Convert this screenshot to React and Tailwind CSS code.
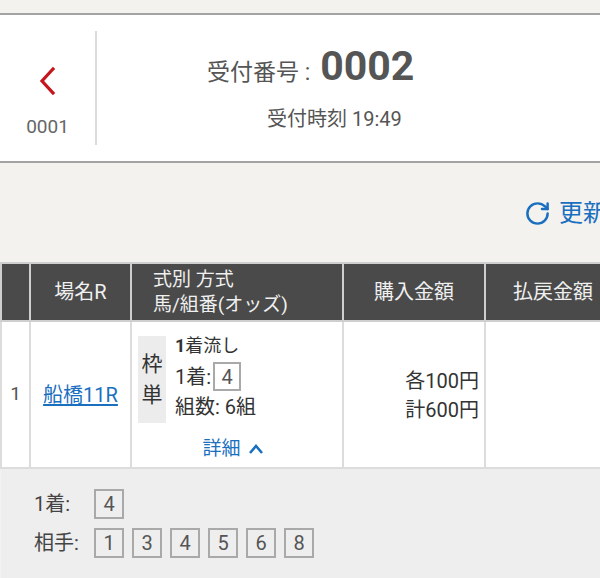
import React from 'react';
import { RotateCw } from 'lucide-react';

const font = { fontFamily: 'Roboto, "Noto Sans CJK JP", sans-serif' };

const NumBox = ({ n }) => (
  <span className="inline-flex items-center justify-center w-[30px] h-[30px] border-2 border-[#a9a9a9] text-[20px] text-[#555] leading-none">
    {n}
  </span>
);

const App = () => {
  const partners = [1, 3, 4, 5, 6, 8];

  return (
    <div className="w-[600px] h-[578px] overflow-hidden bg-[#f3f2ef] text-[#333]" style={font}>
      <div className="h-[13px]" />

      {/* receipt header */}
      <div className="bg-white border-y-2 border-[#a3a3a3] h-[150px] flex items-center">
        <div className="w-[97px] h-[114px] border-r-2 border-[#dcdcdc] flex flex-col items-center">
          <svg width="20" height="30" viewBox="0 0 20 30" className="mt-[35px]">
            <path d="M15 3 L4 15 L15 27" fill="none" stroke="#c4161c" strokeWidth="3.2" strokeLinecap="square" />
          </svg>
          <span className="mt-[21px] text-[19px] text-[#666] leading-none">0001</span>
        </div>
        <div className="flex-1 flex flex-col">
          <div className="ml-[110px] flex items-baseline text-[#555] mt-[4px]">
            <span className="text-[23px]">受付番号 :</span>
            <span className="ml-[10px] text-[41px] font-bold leading-none">0002</span>
          </div>
          <div className="ml-[170px] mt-[14px] text-[20px] text-[#555]">受付時刻 19:49</div>
        </div>
      </div>

      {/* refresh */}
      <div className="h-[99px] flex items-center pl-[524px] pt-[1px] text-[#1a6fbf]">
        <RotateCw size={27} strokeWidth={2.2} className="shrink-0" />
        <span className="ml-[8px] text-[24px] whitespace-nowrap">更新</span>
      </div>

      {/* table */}
      <table className="border-collapse table-fixed w-[640px] text-[20px]">
        <colgroup>
          <col className="w-[29px]" />
          <col className="w-[101px]" />
          <col className="w-[212px]" />
          <col className="w-[142px]" />
          <col className="w-[156px]" />
        </colgroup>
        <thead>
          <tr className="bg-[#4a4a4a] text-[#f0f0f0] h-[58px] font-normal">
            <th className="border-2 border-[#cfcfcf] font-normal"></th>
            <th className="border-2 border-[#cfcfcf] font-normal text-[20px]">場名R</th>
            <th className="border-2 border-[#cfcfcf] font-normal text-left pl-[21px] text-[19px] leading-[25px]">
              式別 方式
              <br />
              馬/組番(オッズ)
            </th>
            <th className="border-2 border-[#cfcfcf] font-normal text-[20px]">購入金額</th>
            <th className="border-2 border-[#cfcfcf] font-normal text-left pl-[27px] text-[20px]">払戻金額</th>
          </tr>
        </thead>
        <tbody>
          <tr className="bg-white h-[147px]">
            <td className="border-2 border-[#dcdcdc] text-center text-[#555] text-[19px]">1</td>
            <td className="border-2 border-[#dcdcdc] text-center">
              <a className="text-[#1a6fbf] underline underline-offset-2">船橋11R</a>
            </td>
            <td className="border-2 border-[#dcdcdc] align-top">
              <div className="flex pt-[14px] pl-[6px]">
                <div className="w-[28px] h-[87px] bg-[#ececec] flex flex-col items-center justify-center text-[21px] leading-[31px]">
                  <span>枠</span>
                  <span>単</span>
                </div>
                <div className="ml-[9px] flex flex-col text-[20px]">
                  <span className="leading-[24px] -mt-[2px] text-[18px]">
                    <span className="font-bold">1</span>着流し
                  </span>
                  <span className="flex items-center mt-[4px] leading-[28px]">
                    1着:
                    <span className="ml-[2px] inline-flex items-center justify-center w-[28px] h-[29px] border-2 border-[#a9a9a9] text-[#555]">4</span>
                  </span>
                  <span className="mt-[2px] leading-[28px]">組数: 6組</span>
                </div>
              </div>
              <div className="flex items-center justify-center mt-[12px] pr-[8px] text-[#1a6fbf] text-[19px]">
                詳細
                <svg width="16" height="12" viewBox="0 0 16 12" className="ml-[7px]">
                  <path d="M2 10 L8 3 L14 10" fill="none" stroke="#1a6fbf" strokeWidth="2.6" />
                </svg>
              </div>
            </td>
            <td className="border-2 border-[#dcdcdc] text-right pr-[5px] leading-[29px] pt-[2px]">
              各100円
              <br />
              計600円
            </td>
            <td className="border-2 border-[#dcdcdc]"></td>
          </tr>
          <tr className="bg-[#eeeeee]">
            <td colSpan={5} className="border-t-2 border-[#dcdcdc] h-[112px] align-top">
              <div className="pl-[33px] pt-[20px] flex flex-col gap-[9px] text-[20px] text-[#444]">
                <div className="flex items-center">
                  <span className="w-[60px]">1着:</span>
                  <NumBox n={4} />
                </div>
                <div className="flex items-center">
                  <span className="w-[60px]">相手:</span>
                  <div className="flex gap-[8px]">
                    {partners.map((p) => (
                      <NumBox key={p} n={p} />
                    ))}
                  </div>
                </div>
              </div>
            </td>
          </tr>
        </tbody>
      </table>
    </div>
  );
};

export default App;
